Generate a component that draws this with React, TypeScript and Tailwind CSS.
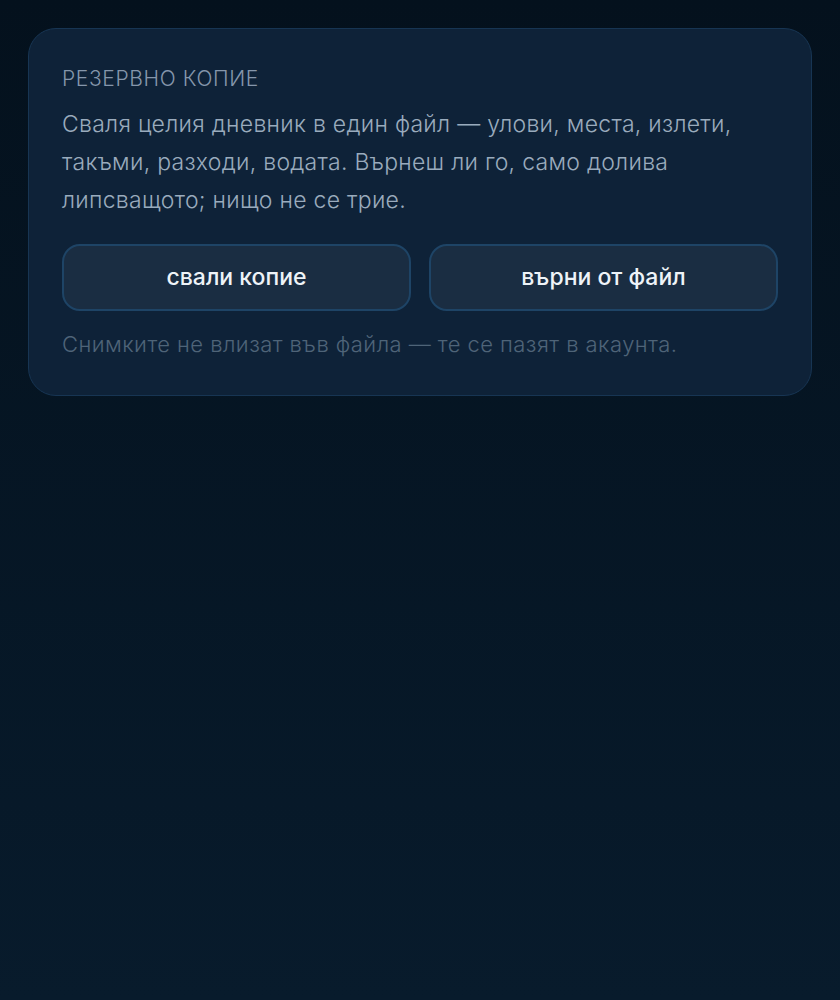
export default function App() {
  return (
    <div
      lang="bg"
      className="min-h-[1000px] w-full bg-gradient-to-b from-[#04111d] to-[#081b2c] px-[28px] pt-[28px]"
      style={{ fontFamily: '"Inter", "Noto Sans", sans-serif' }}
    >
      <div className="rounded-[28px] border border-[#173553] bg-[#0e2238] px-[33px] pt-[36px] pb-[36px]">
        <div className="text-[21px] leading-[28px] uppercase tracking-[0.03em] text-[#8596ab] font-light">
          Резервно копие
        </div>
        <p className="mt-[12px] text-[23px] leading-[38px] tracking-[0.012em] text-[#9aabbd] font-light">
          Сваля целия дневник в един файл — улови, места, излети, такъми, разходи, водата. Върнеш ли го, само долива липсващото; нищо не се трие.
        </p>
        <div className="mt-[25px] grid grid-cols-2 gap-[18px]">
          <button className="h-[67px] rounded-[18px] border-2 border-[#1e4466] bg-[#1a2d42] text-[23px] font-medium text-[#eef3f8]">
            свали копие
          </button>
          <button className="h-[67px] rounded-[18px] border-2 border-[#1e4466] bg-[#1a2d42] text-[23px] font-medium text-[#eef3f8]">
            върни от файл
          </button>
        </div>
        <p className="mt-[18px] text-[22px] leading-[30px] tracking-[0.02em] text-[#4f6478] font-light">
          Снимките не влизат във файла — те се пазят в акаунта.
        </p>
      </div>
    </div>
  );
}
